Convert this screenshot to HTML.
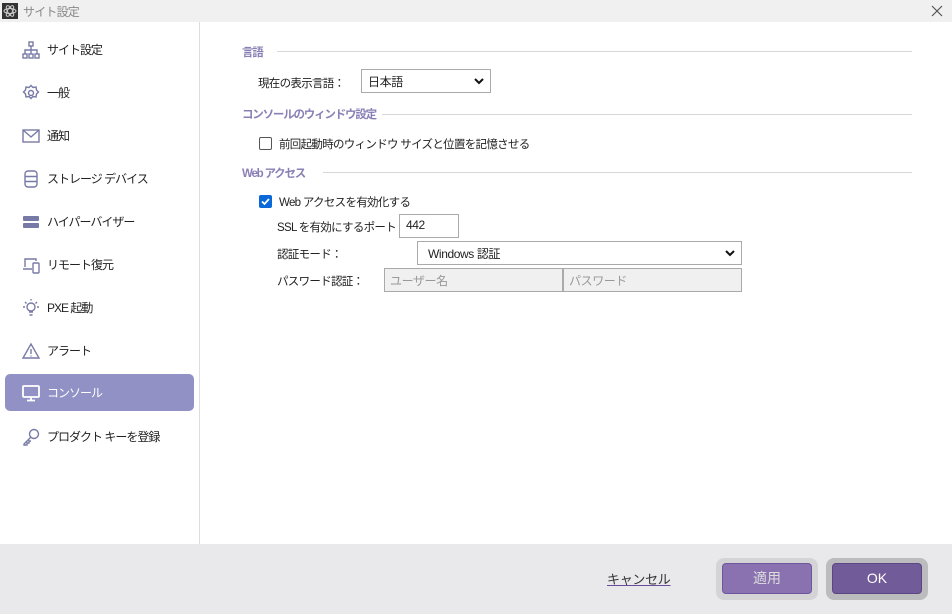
<!DOCTYPE html>
<html><head><meta charset="utf-8"><style>
*{box-sizing:border-box;margin:0;padding:0}
body{width:952px;height:614px;overflow:hidden;background:#fff;font-family:"Liberation Sans","Noto Sans CJK JP",sans-serif;font-size:12px;color:#222;position:relative}
.title{position:absolute;left:0;top:0;width:952px;height:22px;background:#f0f0f0;color:#888;font-size:12px}
.title span{position:absolute;left:23px;top:3px;letter-spacing:-0.8px}
.side{position:absolute;left:0;top:22px;width:200px;height:522px;border-right:1px solid #ddd}
.item{position:absolute;left:5px;width:189px;height:37px;border-radius:5px}
.item svg{position:absolute;left:17px;top:10px}
.item span{position:absolute;left:42px;top:10px;font-size:12px;letter-spacing:-1px;white-space:nowrap}
.sel{background:#9191c6;color:#fff}
.hdr{position:absolute;left:242px;color:#8a80b6;font-weight:bold;font-size:11.5px;letter-spacing:-1.2px;white-space:nowrap}
.line{position:absolute;height:1px;background:#d8d8d8;right:40px}
.t{position:absolute;font-size:11.5px;letter-spacing:-0.7px;white-space:nowrap}
.box{position:absolute;border:1px solid #aaa;background:#fff;font-size:12px;padding:2px 6px;white-space:nowrap;letter-spacing:-0.4px}
.foot{position:absolute;left:0;top:544px;width:952px;height:70px;background:#e9e9ec}
</style></head><body>
<div class="title">
<svg style="position:absolute;left:2px;top:3px" width="16" height="16"><rect width="16" height="16" fill="#333"/><g fill="none" stroke="#ccc" stroke-width="1"><ellipse cx="8" cy="8" rx="6" ry="2.5"/><ellipse cx="8" cy="8" rx="6" ry="2.5" transform="rotate(60 8 8)"/><ellipse cx="8" cy="8" rx="6" ry="2.5" transform="rotate(-60 8 8)"/></g></svg>
<span>サイト設定</span>
<svg style="position:absolute;left:930px;top:4px" width="14" height="14"><path d="M2 2L12 12M12 2L2 12" stroke="#555" stroke-width="1.2"/></svg>
</div>
<div class="side">
<div class="item" style="top:9px"><svg width="18" height="18" fill="none" stroke="#777aa6" stroke-width="1.4"><rect x="7" y="1" width="4" height="4"/><rect x="1" y="13" width="4" height="4"/><rect x="7" y="13" width="4" height="4"/><rect x="13" y="13" width="4" height="4"/><path d="M9 5v8M3 13v-4h12v4"/></svg><span>サイト設定</span></div>
<div class="item" style="top:52px"><svg width="18" height="18" fill="none" stroke="#777aa6" stroke-width="1.4"><circle cx="9" cy="9" r="2.5"/><path d="M9 1.5l2 2 3-.5.5 3 2 2-2 2-.5 3-3-.5-2 2-2-2-3 .5-.5-3-2-2 2-2 .5-3 3 .5z"/></svg><span>一般</span></div>
<div class="item" style="top:95px"><svg width="18" height="18" fill="none" stroke="#777aa6" stroke-width="1.4"><rect x="1" y="3" width="16" height="12"/><path d="M1 3l8 7 8-7"/></svg><span>通知</span></div>
<div class="item" style="top:138px"><svg width="18" height="18" fill="none" stroke="#777aa6" stroke-width="1.4"><rect x="3" y="1" width="12" height="16" rx="3"/><path d="M3 6.5h12M3 11.5h12"/></svg><span>ストレージ デバイス</span></div>
<div class="item" style="top:181px"><svg width="18" height="18" fill="#777aa6"><rect x="1" y="3" width="16" height="5" rx="1"/><rect x="1" y="10" width="16" height="5" rx="1"/></svg><span>ハイパーバイザー</span></div>
<div class="item" style="top:224px"><svg width="18" height="18" fill="none" stroke="#777aa6" stroke-width="1.4"><path d="M3 11V3h11v2M1 13h9"/><rect x="11" y="7" width="6" height="10" rx="1"/></svg><span>リモート復元</span></div>
<div class="item" style="top:267px"><svg width="18" height="18" fill="none" stroke="#777aa6" stroke-width="1.4"><circle cx="9" cy="8" r="4"/><path d="M7 13h4M7.5 16h3M1 8h2M15 8h2M3 3l1.5 1.5M15 3l-1.5 1.5M9 0v1.5"/></svg><span>PXE 起動</span></div>
<div class="item" style="top:310px"><svg width="18" height="18" fill="none" stroke="#777aa6" stroke-width="1.4"><path d="M9 2L1 16h16z"/><path d="M9 7v5M9 13.5v1"/></svg><span>アラート</span></div>
<div class="item sel" style="top:352px"><svg width="18" height="18" fill="none" stroke="#fff" stroke-width="1.8"><rect x="1" y="2" width="16" height="11" rx="1"/><path d="M9 13v3M5 16.5h8"/></svg><span>コンソール</span></div>
<div class="item" style="top:396px"><svg width="18" height="18" fill="none" stroke="#777aa6" stroke-width="1.4"><circle cx="12" cy="6" r="4.5"/><path d="M9 9l-7 7v1h3v-2h2v-2h2"/></svg><span>プロダクト キーを登録</span></div>
</div>

<div class="hdr" style="top:44px">言語</div><div class="line" style="left:277px;top:51px"></div>
<div class="t" style="left:258px;top:75px">現在の表示言語：</div>
<div class="box" style="left:361px;top:69px;width:130px;height:24px;padding-top:3px">日本語<svg style="position:absolute;right:6px;top:7px" width="10" height="8"><path d="M1 2l4 4 4-4" stroke="#111" stroke-width="2" fill="none"/></svg></div>
<div class="hdr" style="top:106px">コンソールのウィンドウ設定</div><div class="line" style="left:382px;top:114px"></div>
<div style="position:absolute;left:259px;top:137px;width:13px;height:13px;border:1px solid #555;border-radius:2px"></div>
<div class="t" style="left:279px;top:136px">前回起動時のウィンドウ サイズと位置を記憶させる</div>
<div class="hdr" style="top:165px">Web アクセス</div><div class="line" style="left:323px;top:172px"></div>
<div style="position:absolute;left:259px;top:195px;width:13px;height:13px;background:#0a68d8;border-radius:2px"><svg width="13" height="13"><path d="M3 6.5l2.5 2.5 4.5-5" stroke="#fff" stroke-width="1.8" fill="none"/></svg></div>
<div class="t" style="left:279px;top:194px">Web アクセスを有効化する</div>
<div class="t" style="left:277px;top:219px">SSL を有効にするポート</div>
<div class="box" style="left:399px;top:214px;width:60px;height:24px;padding-top:3px">442</div>
<div class="t" style="left:277px;top:246px">認証モード：</div>
<div class="box" style="left:417px;top:241px;width:325px;height:24px;padding:3px 10px">Windows 認証<svg style="position:absolute;right:6px;top:7px" width="10" height="8"><path d="M1 2l4 4 4-4" stroke="#111" stroke-width="2" fill="none"/></svg></div>
<div class="t" style="left:277px;top:273px">パスワード認証：</div>
<div class="box" style="left:384px;top:268px;width:179px;height:24px;background:#f0f0f0;color:#999;padding:3px 5px">ユーザー名</div>
<div class="box" style="left:563px;top:268px;width:179px;height:24px;background:#f0f0f0;color:#999;padding:3px 5px">パスワード</div>

<div class="foot">
<div style="position:absolute;left:607px;top:25px;font-size:13px;color:#333;letter-spacing:-0.3px;text-decoration:underline;text-decoration-color:#6a4c9c">キャンセル</div>
<div style="position:absolute;left:716px;top:14px;width:102px;height:42px;background:#d4d4d6;border-radius:8px"></div>
<div style="position:absolute;left:722px;top:19px;width:90px;height:31px;background:#8a72b0;border:1px solid #6e55a0;border-radius:4px;color:#ddd;font-size:14px;text-align:center;line-height:29px">適用</div>
<div style="position:absolute;left:826px;top:14px;width:102px;height:42px;background:#bcbcbe;border-radius:8px"></div>
<div style="position:absolute;left:832px;top:19px;width:90px;height:31px;background:#715b98;border:1px solid #5a4585;border-radius:4px;color:#fff;font-size:14px;text-align:center;line-height:29px">OK</div>
</div>
</body></html>
